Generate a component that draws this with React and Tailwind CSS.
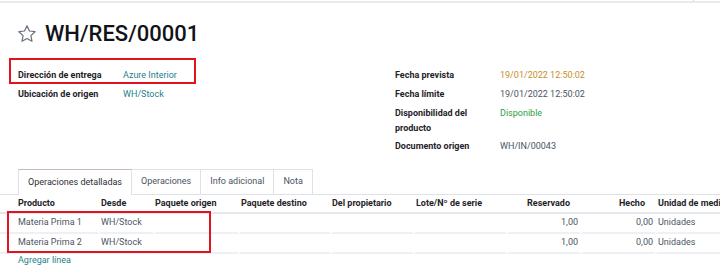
import React from 'react'

const F = { fontFamily: 'Roboto, "Liberation Sans", sans-serif' }

function Star() {
  return (
    <svg width="20" height="20" viewBox="0 0 24 24" fill="none" stroke="#6b7280" strokeWidth="1.5" strokeLinejoin="round">
      <path d="M12 2.2l2.95 6.2 6.75.85-5 4.7 1.3 6.75L12 17.35l-6 3.35 1.3-6.75-5-4.7 6.75-.85z" />
    </svg>
  )
}

function Field({ label, value, color = 'text-[#4b5563]', tall }) {
  return (
    <div className={`flex ${tall ? 'pt-[2px] pb-[1px]' : 'h-[19px] items-center'}`}>
      <div className={`w-[105px] shrink-0 font-bold text-[#1f2329] ${tall ? 'leading-[15px]' : ''}`}>{label}</div>
      <div className={`${color} ${tall ? 'leading-[15px]' : ''}`}>{value}</div>
    </div>
  )
}

export default function App() {
  const cols = [
    { label: 'Producto', w: 'w-[98px]', th: 'text-left pl-[18px]', td: 'text-left pl-[18px]' },
    { label: 'Desde', w: 'w-[55px]', th: 'text-left pl-[3px]', td: 'text-left' },
    { label: 'Paquete origen', w: 'w-[85px]', th: 'text-left pl-[2px]', td: 'text-left' },
    { label: 'Paquete destino', w: 'w-[92px]', th: 'text-left pl-[3px]', td: 'text-left' },
    { label: 'Del propietario', w: 'w-[83px]', th: 'text-left pl-[2px]', td: 'text-left' },
    { label: 'Lote/Nº de serie', w: 'w-[93px]', th: 'text-left pl-[3px]', td: 'text-left' },
    { label: 'Reservado', w: 'w-[74px]', th: 'text-right pr-[10px]', td: 'text-right pr-[2px]' },
    { label: 'Hecho', w: 'w-[75px]', th: 'text-right pr-[10px]', td: 'text-right pr-[2px]' },
    { label: 'Unidad de medida', w: 'w-[110px]', th: 'text-left pl-[3px]', td: 'text-left' },
  ]
  const rows = [
    ['Materia Prima 1', 'WH/Stock', '', '', '', '', '1,00', '0,00', 'Unidades'],
    ['Materia Prima 2', 'WH/Stock', '', '', '', '', '1,00', '0,00', 'Unidades'],
  ]

  return (
    <div className="w-[720px] h-[266px] bg-white overflow-hidden relative text-[9px] text-[#4b5563]" style={F}>
      <div className="h-[3px] border-b-2 border-[#e8e9ee]">
        <div className="w-[694px] h-full border-r border-[#d4d6dc]" />
      </div>

      <div className="flex items-center gap-[8px] pl-[17px] pt-[16px] h-[46px]">
        <Star />
        <div className="text-[22px] font-medium text-[#111318] leading-none">WH/RES/00001</div>
      </div>

      <div className="flex pl-[18px] mt-[17px]">
        <div className="w-[377px]">
          <Field label="Dirección de entrega" value="Azure Interior" color="text-[#1f7f8c]" />
          <Field label="Ubicación de origen" value="WH/Stock" color="text-[#1f7f8c]" />
        </div>
        <div>
          <Field label="Fecha prevista" value="19/01/2022 12:50:02" color="text-[#c58f2c]" />
          <Field label="Fecha límite" value="19/01/2022 12:50:02" />
          <Field label={<>Disponibilidad del<br />producto</>} value="Disponible" color="text-[#2f9e44]" tall />
          <Field label="Documento origen" value="WH/IN/00043" />
        </div>
      </div>

      <div className="mt-[13px] flex border-b border-[#dee2e6] pl-[18px] h-[26px]">
        <div className="px-[9px] flex items-center border border-b-0 border-[#dee2e6] border-t-[#c9b8b8] bg-white text-[#2b2f36] -mb-px">Operaciones detalladas</div>
        <div className="px-[9px] flex items-center border-r border-t border-[#dee2e6]">Operaciones</div>
        <div className="px-[9px] flex items-center border-r border-t border-[#dee2e6]">Info adicional</div>
        <div className="px-[9px] flex items-center border-r border-t border-[#dee2e6]">Nota</div>
      </div>

      <table className="table-fixed w-[765px] border-separate border-spacing-0">
        <colgroup>
          {cols.map(c => <col key={c.label} className={c.w} />)}
        </colgroup>
        <thead>
          <tr>
            {cols.map(c => (
              <th key={c.label} className={`h-[19px] font-bold text-[#1f2329] whitespace-nowrap border-b-2 border-[#e6e7ec] ${c.th}`}>{c.label}</th>
            ))}
          </tr>
        </thead>
        <tbody>
          {rows.map((r, i) => (
            <tr key={i}>
              {r.map((v, j) => (
                <td key={j} className={`h-[20px] whitespace-nowrap border-b-2 border-[#eff0f3] ${j === 0 ? '' : 'border-l-[3px] border-l-white'} ${cols[j].td}`}>{v}</td>
              ))}
            </tr>
          ))}
        </tbody>
      </table>

      <div className="pl-[18px] text-[#1f7f8c] leading-[13px]">Agregar línea</div>

      <div className="absolute left-[9px] top-[58px] w-[187px] h-[26px] border-2 border-[#e0141e]" />
      <div className="absolute left-[7px] top-[211px] w-[204px] h-[42px] border-2 border-[#e0141e]" />
    </div>
  )
}
